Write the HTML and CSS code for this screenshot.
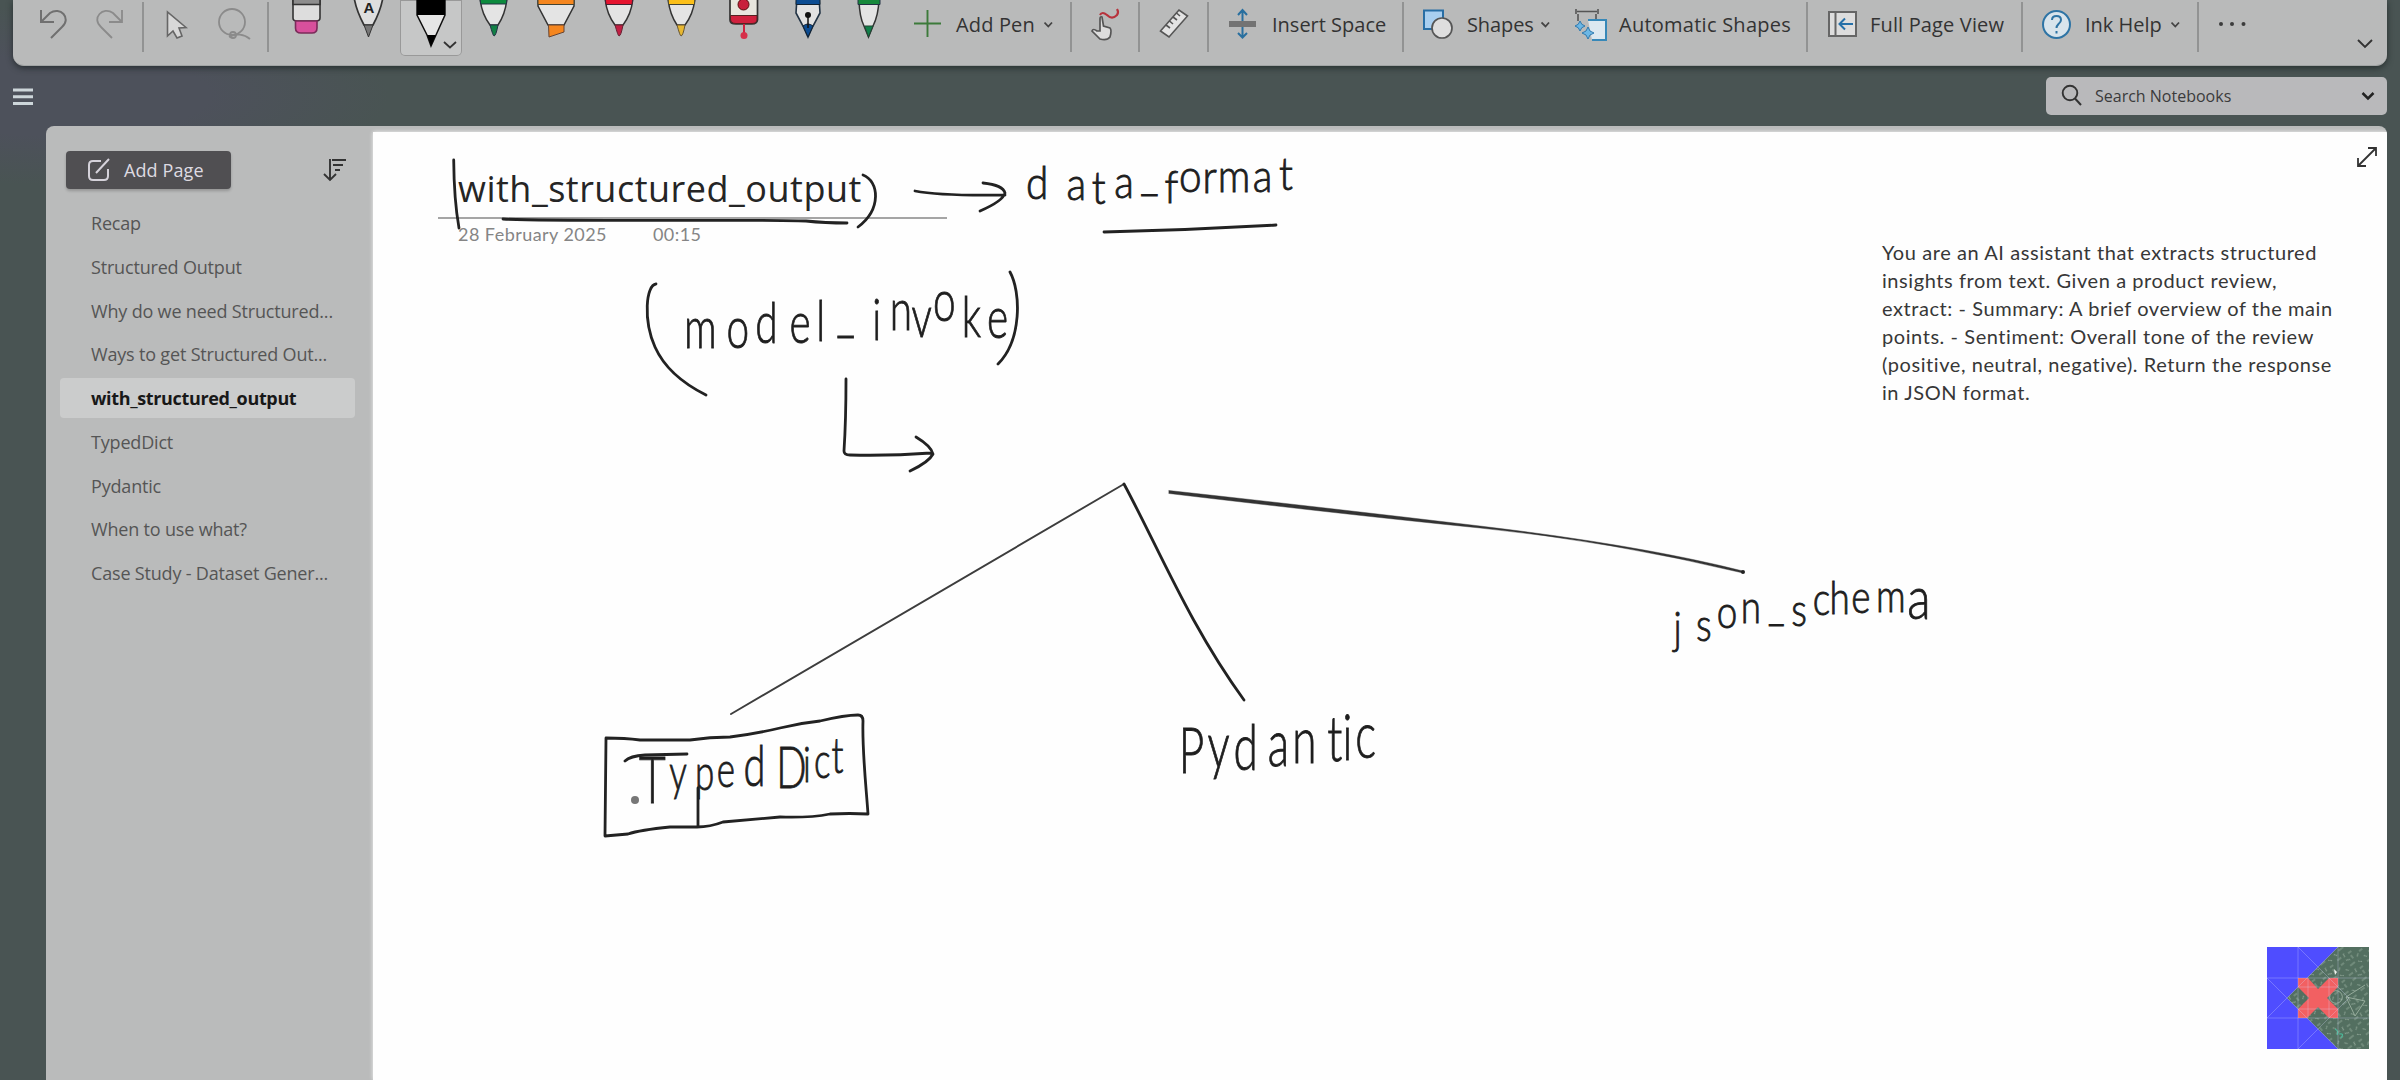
FILE: index.html
```html
<!DOCTYPE html>
<html lang="en">
<head>
<meta charset="utf-8">
<title>with_structured_output</title>
<link rel="stylesheet" href="styles.css">
</head>
<body>
<div class="app">
  <header class="ribbon">
    <svg class="ico" width="69" height="65" viewBox="13 0 69 65"><path class="dim" d="M41 10V22H54M41 22L50 13C60 6 72 18 62 27L51 38"/></svg>
    <svg class="ico" width="60" height="65" viewBox="82 0 60 65"><path class="faint" d="M122 10V22H109M122 22L113 13C103 6 91 18 101 27L112 38"/></svg>
    <i class="sep"></i>
    <svg class="ico" width="58" height="65" viewBox="144 0 58 65"><path d="M167.500 12V36L173 31L177 38L182 36L179 28L186 27.500Z" fill="#d8d8d8" stroke="#666" stroke-width="1.600"/></svg>
    <svg class="ico" width="65" height="65" viewBox="202 0 65 65"><g class="faint"><circle cx="232" cy="22" r="13"/><circle cx="233" cy="35" r="3"/><path d="M229 37C236 33 244 34 250 39"/></g></svg>
    <i class="sep"></i>
    <svg class="ico" width="69" height="65" viewBox="269 0 69 65"><g stroke="#333" stroke-width="1.600"><path d="M293-3H320V18Q320 21 316 21H297Q293 21 293 18Z" fill="#ddd"/><path d="M293-3H320V4.500H293Z" fill="#8d8d8d"/><path d="M295.500 21H317V28Q317 33 312 33H301Q295.500 33 295.500 28Z" fill="#d8509c" stroke="#7b2b5a"/></g></svg>
    <svg class="ico" width="62" height="65" viewBox="338 0 62 65"><path d="M354-3Q356 10 364 25H373Q381 10 383-3Z" fill="#dedede" stroke="#333" stroke-width="1.700"/><path d="M364 25L368.500 37L373 25Z" fill="#777" stroke="#333"/><text class="pen-letter" x="363.500" y="13">A</text></svg>
    <svg class="ico picked" width="62" height="56" viewBox="400 0 62 56"><path d="M417-3V15L427 35L431 46L436 35L445 15V-3Z" fill="#e6e6e6" stroke="#111" stroke-width="1.500"/><path d="M417-3H445V15H417ZM427 35L431 46L436 35Z" fill="#000"/><path d="M444 42L450 47.500L456 42" fill="none" stroke="#333" stroke-width="1.800"/></svg>
    <svg class="ico" width="62" height="65" viewBox="462 0 62 65"><path d="M480-3Q481 13 490 25H498Q506 13 507-3Z" fill="#e4e4e4" stroke="#333" stroke-width="1.500"/><path d="M480-3H507L506.500 4H480.500Z" fill="#0c8a3d" stroke="#234"/><path d="M490 25Q493 36 494 36Q496 36 498 25Z" fill="#108044" stroke="#234"/></svg>
    <svg class="ico" width="64" height="65" viewBox="524 0 64 65"><path d="M538-3V6L548 25H564L574 6V-3Z" fill="#e4e4e4" stroke="#333" stroke-width="1.500"/><path d="M538-3H574V4.500H538Z" fill="#f5861f" stroke="#443"/><path d="M548.500 25H564V32L549 37Z" fill="#f5861f" stroke="#643"/></svg>
    <svg class="ico" width="62" height="65" viewBox="588 0 62 65"><path d="M605-3Q606 13 615 25H623Q632 13 633-3Z" fill="#e4e4e4" stroke="#333" stroke-width="1.500"/><path d="M605-3H633L632 4.500H606Z" fill="#e5142f" stroke="#423"/><path d="M615 25Q618 36 619 36Q621 36 623 25Z" fill="#c21f43" stroke="#623"/></svg>
    <svg class="ico" width="62" height="65" viewBox="650 0 62 65"><path d="M668-3Q669 13 677 25H685Q694 13 695-3Z" fill="#e4e4e4" stroke="#333" stroke-width="1.500"/><path d="M668-3H695L694.500 4.500H668.500Z" fill="#fbbf19" stroke="#443"/><path d="M677 25Q680 36 681 36Q683 36 685 25Z" fill="#e8b830" stroke="#653"/></svg>
    <svg class="ico" width="64" height="65" viewBox="712 0 64 65"><path d="M730-3H757.500V20Q757 24 752 24H736Q730 24 730 20Z" fill="#e8e6de" stroke="#333" stroke-width="1.700"/><path d="M730.500 15.500H757V19Q757 23.500 752 23.500H736Q730.500 23.500 730.500 19Z" fill="#d0213e" stroke="#522"/><circle cx="743.500" cy="4.500" r="5.500" fill="#c8203c" stroke="#511"/><path d="M744 24V34" stroke="#d0213e" stroke-width="2"/><circle cx="744" cy="35.500" r="3.500" fill="#d6304a"/></svg>
    <svg class="ico" width="64" height="65" viewBox="776 0 64 65"><path d="M797-3L796 13L803 26L808 37L813 26L820 13L819-3Z" fill="#e2e2e2" stroke="#234" stroke-width="1.600"/><path d="M796-3H820V4.500H796ZM803 26Q808 22 813 26L808 37Z" fill="#0c4c92" stroke="#123"/><circle cx="808" cy="15" r="3" fill="#111"/><path d="M808 16V28" stroke="#111" stroke-width="1.500"/></svg>
    <svg class="ico" width="56" height="65" viewBox="840 0 56 65"><path d="M859-3Q859 16 864 26L868.500 37L873 26Q879 14 879-3Z" fill="#e4e4e4" stroke="#333" stroke-width="1.500"/><path d="M858-3H880V4.500H858Z" fill="#17893c" stroke="#234"/><path d="M864.500 26H873L868.500 37Z" fill="#10804a" stroke="#243"/></svg>
    <svg class="ico" width="60" height="65" viewBox="896 0 60 65"><path d="M914 23.500H941M927.500 10V37" fill="none" stroke="#3c7a3a" stroke-width="1.900"/></svg>
    <span class="label add-pen">Add Pen</span>
    <svg class="ico" width="26" height="65" viewBox="1044 0 26 65"><path class="chev" d="M1044.500 22.500L1048.300 26.500L1052 22.500"/></svg>
    <i class="sep"></i>
    <svg class="ico" width="66" height="65" viewBox="1072 0 66 65"><path d="M1100 31V19Q1100 16 1102 17L1103.500 26L1110 28Q1112 30 1110 37Q1107 41 1100 39L1092 31Q1093 28 1097 31Z" fill="#ddd" stroke="#555" stroke-width="1.700"/><path d="M1100 15Q1102 11 1107 15Q1112 20 1117 15Q1119 12 1117 9" fill="none" stroke="#b7323c" stroke-width="2.200"/></svg>
    <i class="sep"></i>
    <svg class="ico" width="67" height="65" viewBox="1140 0 67 65"><path d="M1160.500 31L1179 10L1187.500 16L1169 37ZM1166 25L1170 28M1169.500 21L1173 24M1173 17L1177 20M1176.500 13L1180 16" fill="#e3e3e3" stroke="#555" stroke-width="1.600"/></svg>
    <i class="sep"></i>
    <svg class="ico" width="63" height="65" viewBox="1209 0 63 65"><path d="M1229 21H1256V27H1229Z" fill="#737373"/><path d="M1242.500 21V10M1238 15L1242.500 10L1247 15M1242.500 27V37.500M1238 33L1242.500 37.500L1247 33" fill="none" stroke="#286f9f" stroke-width="2"/></svg>
    <span class="label insert">Insert Space</span>
    <i class="sep"></i>
    <svg class="ico" width="63" height="65" viewBox="1404 0 63 65"><path d="M1424 10.500H1443V29H1424Z" fill="#a9cff0" stroke="#286ea5" stroke-width="2"/><circle cx="1442" cy="28" r="10" fill="#dedede" stroke="#555" stroke-width="1.700"/></svg>
    <span class="label shapes">Shapes</span>
    <svg class="ico" width="20" height="65" viewBox="1541 0 20 65"><path class="chev" d="M1541.500 22.500L1545.500 26.500L1549 22.500"/></svg>
    <svg class="ico" width="58" height="65" viewBox="1561 0 58 65"><path d="M1576 9V14M1598 9V14M1577 11.500H1597M1578 14V21M1596 14V20" fill="none" stroke="#555" stroke-width="1.600"/><path d="M1588 20H1606V40H1592" fill="#dce8f0" stroke="#3788b8" stroke-width="2"/><path d="M1580 21Q1581 25 1585 26Q1581 27 1580 31Q1579 27 1575 26Q1579 25 1580 21ZM1588 27Q1589 32 1594 33Q1589 34 1588 39Q1587 34 1582 33Q1587 32 1588 27Z" fill="#6cb7e5" stroke="#2c79b0"/></svg>
    <span class="label auto">Automatic Shapes</span>
    <i class="sep"></i>
    <svg class="ico" width="62" height="65" viewBox="1808 0 62 65"><path d="M1829 12H1856V36H1829ZM1835.500 12V36" fill="#ddd" stroke="#666" stroke-width="2"/><path d="M1853 24H1840M1845 18.500L1839.500 24L1845 29.500" fill="none" stroke="#2670a8" stroke-width="2"/></svg>
    <span class="label full">Full Page View</span>
    <i class="sep"></i>
    <svg class="ico" width="62" height="65" viewBox="2023 0 62 65"><circle cx="2056.500" cy="24.500" r="13.500" fill="#d8e4ec" stroke="#2e74a5" stroke-width="2"/><path d="M2052 20Q2052 16 2056.500 16Q2061 16 2061 20Q2061 22 2058.500 24Q2056.500 26 2056.500 28M2056.500 31V33.500" fill="none" stroke="#2e74a5" stroke-width="2"/></svg>
    <span class="label help">Ink Help</span>
    <svg class="ico" width="26" height="65" viewBox="2171 0 26 65"><path class="chev" d="M2171.500 22.500L2175.300 26.500L2179 22.500"/></svg>
    <i class="sep"></i>
    <svg class="ico" width="141" height="65" viewBox="2199 0 141 65"><g fill="#3c3c3c"><circle cx="2221" cy="24" r="2"/><circle cx="2232" cy="24" r="2"/><circle cx="2243.500" cy="24" r="2"/></g></svg>
    <svg class="ico" width="46" height="65" viewBox="2340 0 46 65"><path d="M2358 40L2365 47L2372 40" fill="none" stroke="#333" stroke-width="1.900"/></svg>
  </header>

  <div class="topbar">
    <svg class="menu" width="20" height="18" viewBox="0 0 20 18"><path d="M0 2H20M0 8.800H20M0 15.600H20" stroke="#cdd6da" stroke-width="3"/></svg>
    <div class="search">
      <svg width="22" height="24" viewBox="0 0 22 24"><circle cx="9" cy="9" r="7.300" fill="none" stroke="#333" stroke-width="1.900"/><path d="M14 14.500L20 21" stroke="#333" stroke-width="2"/></svg>
      <span>Search Notebooks</span>
      <svg width="14" height="10" viewBox="0 0 14 10"><path d="M1.500 2L7 7.500L12.500 2" fill="none" stroke="#222" stroke-width="2.500"/></svg>
    </div>
  </div>

  <main class="notebook">
    <aside class="pages">
      <div class="pages-head">
        <button class="add-page">
          <svg width="24" height="24" viewBox="0 0 24 24"><path d="M14 3H6Q2 3 2 7V18Q2 22 6 22H17Q21 22 21 18V11M9 15L22 1" fill="none" stroke="#d5d2da" stroke-width="2"/></svg>
          <span>Add Page</span>
        </button>
        <svg width="24" height="24" viewBox="0 0 24 24"><path d="M7 1V22M1 16L7 22L13 16M9 2H23M10 7H20M12 12H17" fill="none" stroke="#333" stroke-width="1.900"/></svg>
      </div>
      <nav class="page-list">
        <a>Recap</a>
        <a>Structured Output</a>
        <a>Why do we need Structured...</a>
        <a>Ways to get Structured Out...</a>
        <a class="current">with_structured_output</a>
        <a>TypedDict</a>
        <a>Pydantic</a>
        <a>When to use what?</a>
        <a>Case Study - Dataset Gener...</a>
      </nav>
    </aside>

    <section class="canvas">
      <div class="title-block">
        <h1>with_structured_output</h1>
        <div class="stamp"><span>28 February 2025</span><span>00:15</span></div>
      </div>
      <svg class="expand" width="22" height="22" viewBox="0 0 22 22"><path d="M2 20L20 2M12 2H20V10M2 12V20H10"/></svg>
      <p class="note">You are an AI assistant that extracts structured<br>insights from text. Given a product review,<br>extract: - Summary: A brief overview of the main<br>points. - Sentiment: Overall tone of the review<br>(positive, neutral, negative). Return the response<br>in JSON format.</p>

      <svg class="ink" width="2014" height="948" viewBox="373 132 2014 948">
        <!-- title marks and arrow -->
        <path d="M453.700 160Q454 200 459 228"/>
        <path d="M503 219C560 222 740 219 806 221C825 223 835 223 847 223"/>
        <path d="M863 175C879 181 882 209 858 227"/>
        <path d="M915 191Q940 196 1005 195M983 183Q1003 185 1005 193Q1003 201 980 211"/>
        <path d="M1104 232Q1190 230 1276 225"/>
        <!-- brackets and corner arrow -->
        <path d="M656 284C646 285 643 320 655 347Q668 376 706 395"/>
        <path d="M1010 272C1021 292 1022 340 998 364"/>
        <path d="M846 379Q846 420 844 451Q844 455 850 455Q890 456 931 453M916 437Q931 446 933 454Q929 462 910 471"/>
        <!-- branches -->
        <path class="thin" d="M731 714L1124 484"/>
        <path d="M1124 484C1158 547 1190 626 1244 700"/>
        <path class="taper" d="M1169 490.500Q1320 507 1480 526T1743 571L1743 573Q1610 541 1480 528T1169 493.500Z"/>
        <circle class="tip" cx="1743" cy="572" r="2"/>
        <!-- box -->
        <path d="M606 738Q625 738 640 740H690Q710 737 730 737Q755 734 780 728Q800 723 820 721Q845 715 858 715Q863 715 863 721C862 750 866 785 868 814Q850 813 830 814Q810 818 780 817L723 822Q710 827 697 827H670Q640 830 628 834L605 836Z"/>
        <path d="M698 788V826M625 761Q630 756 645 755L687 754"/>
        <circle class="pointer" cx="635" cy="800" r="4"/>

        <text class="word data" transform="scale(.9 1)" x="1140 1185 1213 1238 1267 1294 1310 1336 1353 1392 1421" y="199 200 204 198 190 203 192 193 192 192 190">data_format</text>
        <text class="word model" transform="scale(.7 1)" x="977 1038 1079 1128 1166 1195 1246 1271 1302 1333 1374 1410" y="348 348 343 343 341 330 340 330 337 321 337 338">model_invoke</text>
        <text class="word typed" transform="scale(.7 1)" x="913 956 993 1024 1062 1109 1147 1163 1188" y="803 790 790 787 786 788 782 778 773"><tspan class="cap-t">T</tspan>ype<tspan class="tall">dD</tspan>ict</text>
        <text class="word pyd" transform="scale(.7 1)" x="1684 1725 1762 1811 1846 1896 1918 1936" y="773 768 770 766 763 761 760 758">Pydantic</text>
        <text class="word json" transform="scale(.8 1)" x="2092 2120 2146 2176 2210 2239 2266 2287 2314 2345 2384" y="644 641 628 623 620 626 615 614 613 612 619">json_schem<tspan class="wide-a">a</tspan></text>
      </svg>

      <svg class="badge" width="102" height="102" viewBox="0 0 102 102">
        <defs>
          <pattern id="chalk" width="23" height="19" patternUnits="userSpaceOnUse" patternTransform="rotate(-38)">
            <path d="M1 3H5M8 2L12 4M15 1V5M19 6L22 4M2 9L4 12M8 9H14M17 10L20 13M1 16H6M10 14L9 18M14 17H18" fill="none" stroke="#b5c7b9" stroke-width=".8" opacity=".75"/>
          </pattern>
        </defs>
        <path d="M0 0H102V102H0Z" fill="#4f4dff"/>
        <path d="M71 0H102V102H71L20 51Z" fill="#536f60"/>
        <path d="M71 0H102V102H71L20 51Z" fill="url(#chalk)"/>
        <path d="M79 50L98 54L88 69ZM79 50L98 38M63 48A6 6 0 1 0 75 52A6 6 0 1 0 63 48" fill="none" stroke="#a6baaa" stroke-width=".8"/>
        <path d="M68 82Q72 84 70 88M72 87Q78 86 74 91" fill="none" stroke="#4bb798" stroke-width="1.200"/>
        <path d="M31 31H41L51 42L62 31H71V40L60 51L71 62V71H62L51 60L40 71H31V62L42 51L31 40Z" fill="#f26062"/>
        <path d="M31 0V102M71 0V102M0 31H102M0 71H102M31 0L82 51M0 31L71 102M0 71L71 0M31 102L82 51M41 31V71M62 31V71M31 40H71M31 62H71" fill="none" stroke="#d9dcff" stroke-width=".7" opacity=".42"/>
        <path d="M67 22L70 25L68 28Z" fill="#edf2ed"/>
      </svg>
    </section>
  </main>
</div>
</body>
</html>
```
FILE: styles.css
```css
* { box-sizing: border-box; }
body {
  margin: 0;
  width: 2400px;
  height: 1080px;
  overflow: hidden;
  font-family: "Open Sans", "Noto Sans", sans-serif;
  background: #495453;
}
.app {
  height: 1080px;
  padding: 0 13px;
  display: flex;
  flex-direction: column;
  background: radial-gradient(ellipse 330px 90px at 60px 95px, #4d515b 45%, rgba(77, 81, 91, 0) 100%), #495453;
}

/* Ribbon */
.ribbon {
  flex: none;
  height: 66px;
  display: flex;
  align-items: flex-start;
  background: #b9baba;
  border-bottom: 1px solid #a2a5a5;
  border-radius: 0 0 11px 11px;
  box-shadow: 0 2px 6px rgba(20, 28, 28, .65);
  overflow: hidden;
}
.ribbon > * { flex: none; }
.ico { display: block; }
.dim { fill: none; stroke: #707070; stroke-width: 2; }
.faint { fill: none; stroke: #8b8b8b; stroke-width: 1.8; }
.chev { fill: none; stroke: #444; stroke-width: 1.8; }
.sep { width: 2px; height: 50px; margin-top: 2px; background: #929393; }
.picked {
  background: #c6c7c7;
  border-radius: 0 0 5px 5px;
  box-shadow: inset 0 0 0 1px #999;
}
.pen-letter { font: 700 15px "Liberation Sans", sans-serif; fill: #222; }
.label {
  height: 50px;
  line-height: 50px;
  font-size: 20px;
  letter-spacing: .15px;
  font-weight: 500;
  color: #333;
  white-space: nowrap;
}
.add-pen { width: 88px; }
.insert { width: 130px; letter-spacing: 0; }
.shapes { width: 74px; letter-spacing: -.1px; }
.auto { width: 187px; letter-spacing: .25px; }
.full { width: 151px; }
.help { width: 86px; letter-spacing: 0; }

/* Bar between the ribbon and the notebook */
.topbar {
  flex: none;
  height: 60px;
  display: flex;
  justify-content: space-between;
  align-items: center;
}
.menu { margin-top: 2px; }
.search {
  width: 341px;
  height: 38px;
  padding: 0 12px 0 15px;
  display: flex;
  align-items: center;
  gap: 12px;
  border-radius: 5px;
  background: #b9b9bb;
  font-size: 16px;
  color: #3b3b3b;
}
.search span { flex: 1; }

/* Notebook */
.notebook {
  flex: 1;
  margin-left: 33px;
  display: flex;
  background: #babbbb;
  border-radius: 8px 8px 0 0;
  overflow: hidden;
}
.pages { flex: none; width: 327px; padding: 25px 18px 0 14px; }
.pages-head {
  display: flex;
  align-items: center;
  justify-content: space-between;
  padding: 0 8px 0 6px;
}
.add-page {
  width: 165px;
  height: 38px;
  padding: 0 0 0 21px;
  display: flex;
  align-items: center;
  gap: 13px;
  border: 0;
  border-radius: 4px;
  background: #504f52;
  box-shadow: 0 2px 3px rgba(0, 0, 0, .2);
  color: #dedbe2;
  font: 500 18px "Open Sans", sans-serif;
  letter-spacing: .1px;
}
.page-list {
  margin-top: 14px;
  display: flex;
  flex-direction: column;
  gap: 3.75px;
}
.page-list a {
  height: 40px;
  padding-left: 31px;
  line-height: 40px;
  font-size: 18px;
  letter-spacing: -.18px;
  color: #555;
  white-space: nowrap;
}
.page-list .current {
  background: #cbcccc;
  border-radius: 4px;
  font-weight: 700;
  letter-spacing: -.35px;
  color: #181818;
}

/* Free note canvas */
.canvas {
  position: relative;
  flex: 1;
  margin-top: 6px;
  background: #fefefe;
  box-shadow: 0 0 4px rgba(255, 255, 255, .8);
}
.title-block {
  position: absolute;
  left: 65px;
  top: 30px;
  width: 509px;
}
.title-block h1 {
  margin: 0;
  height: 57px;
  padding-left: 20px;
  border-bottom: 2px solid #a5a5a5;
  font: 400 36px/54px "Open Sans", sans-serif;
  letter-spacing: .5px;
  color: #252525;
}
.stamp {
  padding: 3px 0 0 20px;
  display: flex;
  gap: 46px;
  font: 400 18px/24px Lato, sans-serif;
  letter-spacing: .45px;
  color: #858585;
}
.expand { position: absolute; right: 9px; top: 14px; }
.expand path { fill: none; stroke: #333; stroke-width: 1.8; }
.note {
  position: absolute;
  left: 1509px;
  top: 106px;
  margin: 0;
  font: 400 20px/28px Lato, sans-serif;
  letter-spacing: .57px;
  color: #373737;
  white-space: nowrap;
}
.ink { position: absolute; left: 0; top: 0; }
.ink path {
  fill: none;
  stroke: #222;
  stroke-width: 2.8;
  stroke-linecap: round;
  stroke-linejoin: round;
}
.ink .thin { stroke: #3d3d3d; stroke-width: 1.9; }
.ink .taper { fill: #333; stroke: #333; stroke-width: .4; }
.ink .tip { fill: #222; }
.ink .pointer { fill: #777; }
.word {
  font-family: Lato, sans-serif;
  font-weight: 300;
  fill: #1e1e1e;
  stroke: #1e1e1e;
  stroke-width: .9;
}
.data { font-size: 45px; }
.model { font-size: 58px; }
.typed { font-size: 50px; }
.cap-t { font-size: 66px; }
.tall { font-size: 57px; }
.pyd { font-size: 63px; }
.json { font-size: 46px; }
.wide-a { font-size: 60px; }
.badge { position: absolute; left: 1894px; top: 815px; }
```
